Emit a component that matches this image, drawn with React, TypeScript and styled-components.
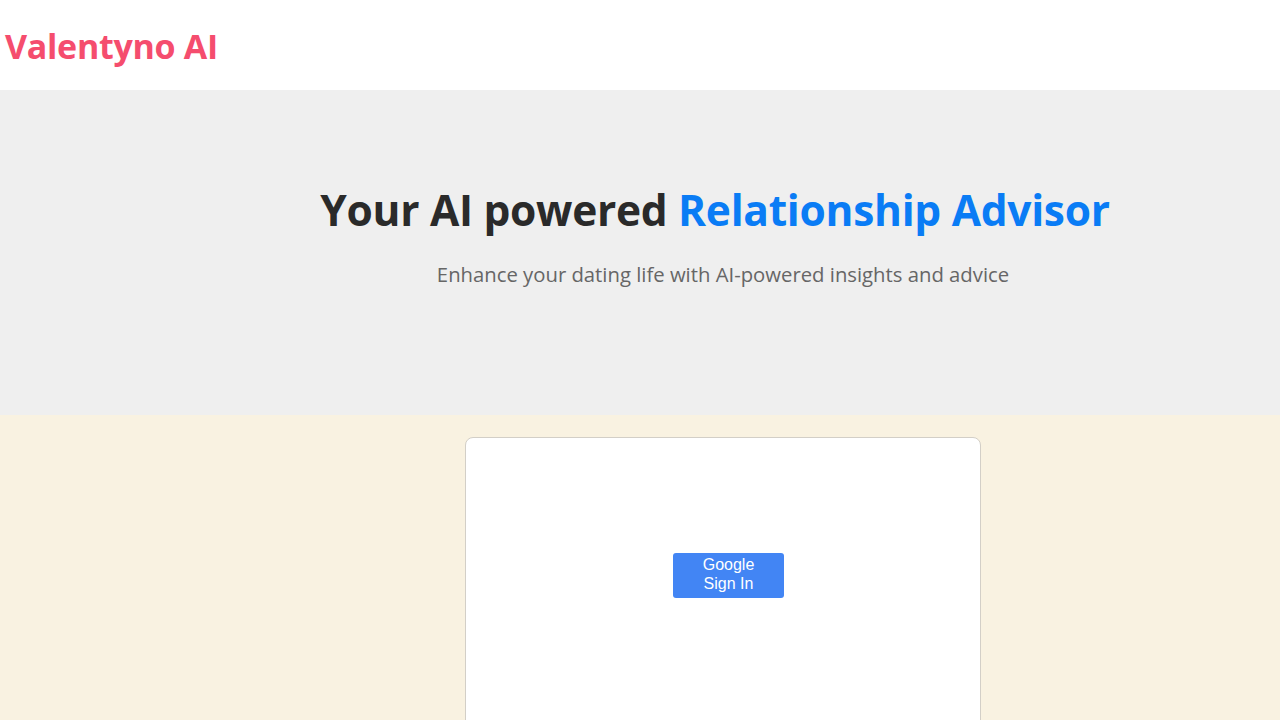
import React from "react";
import styled, { createGlobalStyle } from "styled-components";

const GlobalStyle = createGlobalStyle`
  body {
    margin: 0;
    font-family: "Open Sans", "Noto Sans", sans-serif;
    background-color: #f9f2e1;
  }
`;

const Header = styled.header`
  height: 90px;
  background-color: #fff;
  display: flex;
  align-items: center;
  padding: 2px 0 0 5px;
  box-sizing: border-box;
`;

const Logo = styled.h1`
  margin: 0;
  font-size: 34px;
  font-weight: 700;
  color: #f54d6e;
  letter-spacing: -0.3px;
`;

const Hero = styled.section`
  height: 325px;
  background-color: #efefef;
  display: flex;
  flex-direction: column;
  align-items: center;
  padding-left: 150px;
  padding-top: 91px;
  box-sizing: border-box;
`;

const Title = styled.h2`
  margin: 0;
  font-size: 42.5px;
  font-weight: 700;
  color: #2a2a2a;
  letter-spacing: -0.3px;
`;

const Accent = styled.span`
  color: #0a7cf5;
`;

const Sub = styled.p`
  margin: 22px 0 0;
  padding-left: 16px;
  font-size: 20.3px;
  color: #666;
`;

const Main = styled.main`
  display: flex;
  justify-content: center;
  padding: 22px 0 0 166px;
`;

const Card = styled.div`
  width: 516px;
  min-height: 300px;
  background-color: #fff;
  border: 1px solid #d3cfc7;
  border-radius: 8px;
  box-sizing: border-box;
  display: flex;
  justify-content: center;
  align-items: flex-start;
  padding: 115px 0 0 11px;
`;

const GoogleButton = styled.button`
  width: 111px;
  height: 45px;
  background-color: #4285f4;
  color: #fff;
  border: none;
  border-radius: 3px;
  font-family: "Liberation Sans", Arial, sans-serif;
  font-size: 16px;
  line-height: 19px;
  padding: 0 18px 3px;
  cursor: pointer;
`;

export default function App() {
  return (
    <>
      <GlobalStyle />
      <Header>
        <Logo>Valentyno AI</Logo>
      </Header>
      <Hero>
        <Title>
          Your AI powered <Accent>Relationship Advisor</Accent>
        </Title>
        <Sub>Enhance your dating life with AI-powered insights and advice</Sub>
      </Hero>
      <Main>
        <Card>
          <GoogleButton>Google Sign In</GoogleButton>
        </Card>
      </Main>
    </>
  );
}
